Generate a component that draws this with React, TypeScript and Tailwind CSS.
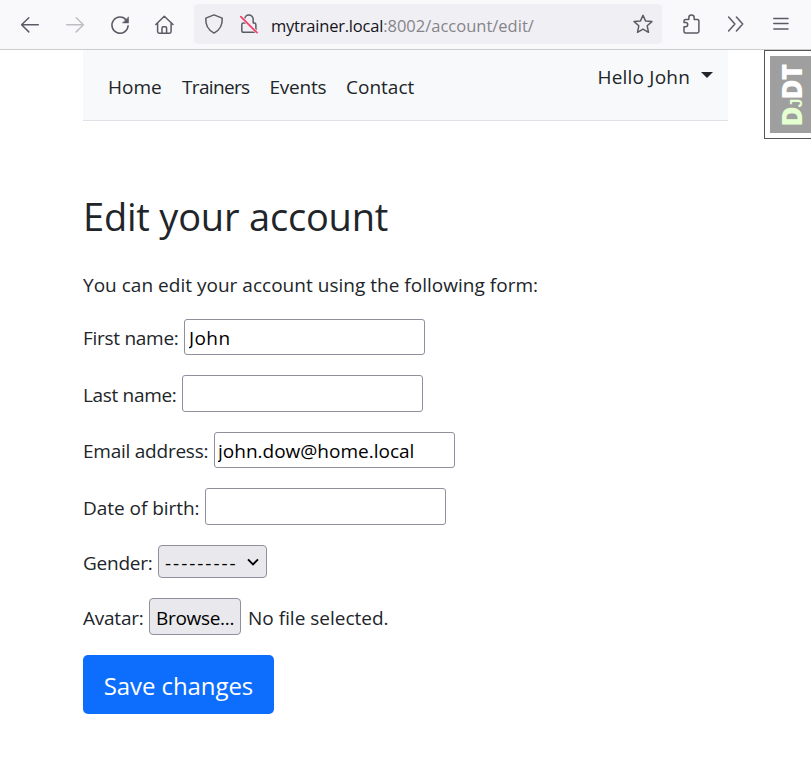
import type { ReactNode } from "react";

function Icon({ children, color = "#5b5b66", label }: { children: ReactNode; color?: string; label: string }) {
  return (
    <svg
      role="img"
      aria-label={label}
      className="block h-5 w-5 shrink-0 overflow-visible"
      viewBox="0 0 20 20"
      fill="none"
      stroke={color}
      strokeWidth="1.5"
      strokeLinecap="round"
      strokeLinejoin="round"
    >
      {children}
    </svg>
  );
}

function Toolbar() {
  return (
    <header className="flex h-[50px] items-start border-b border-[#cccccc] bg-[#f9f9fb] pt-1">
      <div className="flex h-10 w-[194px] items-center gap-[25px] pt-px pl-5">
        <Icon label="Back">
          <path d="M18.3 9.7H1.8M8.8 2.8L1.6 9.7l7.2 7.2" />
        </Icon>
        <Icon label="Forward" color="#bfbfc3">
          <path d="M1.7 9.7h16.5M11.2 2.8l7.2 6.9-7.2 7.2" />
        </Icon>
        <Icon label="Reload">
          <path d="M16.4 5.2A8.1 8.1 0 1 0 18.1 10.8" />
          <path d="M18.5 2.2v5.7h-5.7z" fill="#5b5b66" strokeWidth="0.6" />
        </Icon>
        <Icon label="Home">
          <path d="M.8 9.5L9.3 1.3l8.7 8.2M2.6 8v8.6q0 1.6 1.6 1.6h10.3q1.6 0 1.6-1.6V8M7 18v-5q0-1.2 1.2-1.2h2.2q1.2 0 1.2 1.2v5" />
        </Icon>
      </div>
      <div className="flex h-10 w-[468px] items-center rounded-[4px] bg-[#f0f0f4] pr-[9px] pl-[10px]">
        <Icon label="Shield">
          <path d="M10 .9l8.200 3.200c.4 6.500-2.200 11.900-8.200 15C4 16 1.400 10.600 1.800 4.100z" />
        </Icon>
        <span className="w-[15px]" />
        <Icon label="Connection not secure">
          <path d="M5.600 6V5.300a4.300 4.300 0 0 1 8.600 0v3.800h1q1.700 0 1.700 1.700v5.800q0 1.700-1.700 1.700H4.500q-1.700 0-1.700-1.700v-5.800q0-1.700 1.700-1.700h3" />
          <path d="M1.800 2.600L18 18.700" stroke="#f0f0f4" strokeWidth="3" />
          <path d="M1.800 2.600L18 18.700" stroke="#f83e68" strokeWidth="1.700" />
        </Icon>
        <span className="w-3" />
        <p className="pt-1 text-[16.500px] leading-5 whitespace-nowrap">
          <span className="tracking-[-0.21px] text-[#15141a]">mytrainer.local</span>
          <span className="text-[#85848a]">:8002/account/edit/</span>
        </p>
        <div className="ml-auto">
          <Icon label="Bookmark">
            <path d="M10 1.200l2.500 5.700 6.400.7-4.700 4.200 1.300 6.500-5.500-3.200-5.500 3.200 1.300-6.500-4.700-4.200 6.400-.7z" />
          </Icon>
        </div>
      </div>
      <div className="flex h-10 items-center gap-[25px] pl-5">
        <Icon label="Extensions">
          <path d="M2 12.700v4.700q0 1.500 1.500 1.500h11.800q1.600 0 1.600-1.600V6.900q0-1.500-1.500-1.500h-3.200V3.700a2.700 2.700 0 0 0-5.400 0v1.700H3.500Q2 5.400 2 6.900v1.600h1.600a2.100 2.100 0 0 1 0 4.200z" />
        </Icon>
        <Icon label="More tools">
          <path d="M1.600 3.100L7.900 10l-6.300 6.900M9.400 3.100l6.300 6.900-6.300 6.900" />
        </Icon>
        <Icon label="Menu">
          <path d="M1.800 4.500h14.200M1.800 9.500h14.200M1.800 15h14.200" />
        </Icon>
      </div>
    </header>
  );
}

function SiteNav() {
  return (
    <nav className="flex h-[71px] items-start justify-between border-b border-[#dee2e6] bg-[#f8f9fa] pl-[25px]">
      <div className="flex pt-[21px] leading-8">
        <a className="w-[74px]">Home</a>
        <a className="w-[87.500px] tracking-[-0.65px]">Trainers</a>
        <a className="w-[76.500px] tracking-[-0.24px]">Events</a>
        <a>Contact</a>
      </div>
      <div className="flex items-start pt-[11px] pr-[15px] leading-8">
        <span className="tracking-[0.2px]">Hello John</span>
        <span className="mt-[11px] ml-[11px] border-x-[6px] border-t-[6px] border-x-transparent border-t-[#212529]" />
      </div>
    </nav>
  );
}

function DebugHandle() {
  return (
    <aside className="absolute top-[50px] right-0 h-[89px] w-[47px] border border-r-0 border-[#555555] bg-white pt-[5px] pl-[5px]">
      <div className="flex h-[77px] items-end justify-start bg-[#9f9f9f] pb-[6px] pl-[4px]">
        <span className="rotate-180 text-[28px] leading-[34px] font-extrabold tracking-[-1.200px] text-white [text-orientation:sideways] [writing-mode:vertical-rl]">
          <span className="text-[#e4ffd0]">
            D<span className="font-['Liberation_Sans',sans-serif] text-[16px]">J</span>
          </span>
          DT
        </span>
      </div>
    </aside>
  );
}

const inputClass = "w-[241px] rounded-[3px] border border-[#8f8f9d] bg-white px-[3px] pt-0.5 text-black outline-none";

export default function App() {
  return (
    <div className="relative h-[758px] overflow-hidden bg-white font-['Open_Sans',sans-serif] text-[19px] text-[#212529]">
      <Toolbar />
      <main className="ml-[83px] w-[645px]">
        <SiteNav />
        <h1 className="mt-[67px] h-14 text-[38px] leading-[56px] tracking-[-0.2px]">Edit your account</h1>
        <p className="mt-[25px] h-8 leading-8 tracking-[0.02px]">You can edit your account using the following form:</p>
        <form className="mt-[18px]">
          <div className="mb-5 flex h-9 items-center">
            <label htmlFor="first" className="w-[101px] pt-0.5 tracking-[-0.28px]">First name:</label>
            <input id="first" className={`${inputClass} h-9 pl-1 tracking-[0.4px]`} defaultValue="John" />
          </div>
          <div className="mb-5 flex h-[37px] items-center">
            <label htmlFor="last" className="w-[99px] pt-1 tracking-[-0.33px]">Last name:</label>
            <input id="last" className={`${inputClass} h-[37px]`} />
          </div>
          <div className="mb-5 flex h-9 items-center">
            <label htmlFor="email" className="w-[131px] pt-0.5 tracking-[-0.24px]">Email address:</label>
            <input id="email" className={`${inputClass} h-9`} defaultValue="john.dow@home.local" />
          </div>
          <div className="mb-5 flex h-[37px] items-center">
            <label htmlFor="birth" className="w-[122px] pt-1 tracking-[-0.04px]">Date of birth:</label>
            <input id="birth" className={`${inputClass} h-[37px]`} />
          </div>
          <div className="mb-5 flex h-[33px] items-center">
            <span className="w-[75px] pt-1 tracking-[-0.25px]">Gender:</span>
            <button type="button" className="flex h-[33px] w-[109px] items-center justify-between rounded-[4px] border border-[#8f8f9d] bg-[#e9e9ed] pr-[7px] pl-[6px] text-black">
              <span className="pt-1 tracking-[1.960px]">---------</span>
              <svg className="h-3 w-3" viewBox="0 0 12 12" fill="none" stroke="#000" strokeWidth="1.900">
                <path d="M1 3.300l5 5 5-5" />
              </svg>
            </button>
          </div>
          <div className="mb-5 flex h-[37px] items-center">
            <span className="w-[66px] pt-1 tracking-[-0.24px]">Avatar:</span>
            <button type="button" className="h-[37px] w-[92px] rounded-[4px] border border-[#8f8f9d] bg-[#e9e9ed] pt-1 pl-[6px] text-left tracking-[-0.3px] text-black">
              Browse...
            </button>
            <span className="pt-1 pl-[7px]">No file selected.</span>
          </div>
          <button type="button" className="h-[59px] w-[191px] rounded-[5px] bg-[#0d6efd] pt-[3px] text-[24px] tracking-[-0.08px] text-white">
            Save changes
          </button>
        </form>
      </main>
      <DebugHandle />
    </div>
  );
}
